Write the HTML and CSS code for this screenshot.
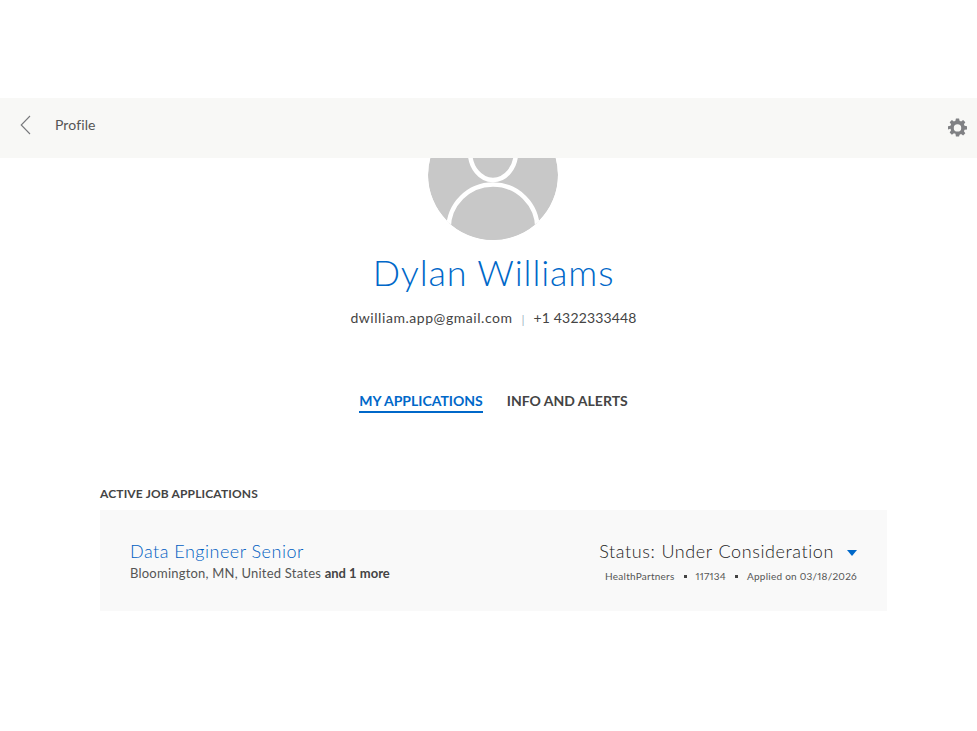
FILE: index.html
```html
<!DOCTYPE html>
<html lang="en">
<head>
<meta charset="utf-8">
<title>Profile</title>
<link rel="stylesheet" href="styles.css">
</head>
<body>
<header class="topbar">
  <a class="back" href="#" aria-label="Back">
    <svg width="11" height="20" viewBox="0 0 11 20"><path d="M10 1 1.2 10 10 19" fill="none" stroke="#77787b" stroke-width="1.1"/></svg>
  </a>
  <span class="topbar-title">Profile</span>
  <svg class="gear" width="19" height="19" viewBox="0 0 24 24"><path fill="#808184" fill-rule="evenodd" d="M10 1h4l.6 3.1 1.900.8L19.100 3.100 21.900 5.900 20.100 8.500l.8 1.900L24 11v4l-3.100.2-.8 1.900 1.800 2.600-2.800 2.800-2.600-1.800-1.900.8L14 24h-4l-.6-3.500-1.900-.8-2.600 1.800-2.800-2.800 1.800-2.600-.8-1.900L0 15v-4l3.100-.6.800-1.900L2.100 5.900 4.900 3.100 7.500 4.900l1.900-.8L10 1Zm2 7.300a4.700 4.700 0 1 0 0 9.400 4.700 4.700 0 0 0 0-9.400Z" transform="translate(0 -.5)"/></svg>
</header>
<main class="page">
  <section class="identity">
    <svg class="avatar" width="130" height="82" viewBox="0 48 130 82">
      <defs><clipPath id="avatar-clip"><circle cx="65" cy="65" r="65"/></clipPath></defs>
      <g clip-path="url(#avatar-clip)">
        <circle cx="65" cy="65" r="65" fill="#c8c8c8"/>
        <ellipse cx="65" cy="42" rx="23" ry="28" fill="#c8c8c8" stroke="#fff" stroke-width="4.500"/>
        <circle cx="65" cy="119" r="44.500" fill="#c8c8c8" stroke="#fff" stroke-width="4.500"/>
      </g>
    </svg>
    <h1 class="name">Dylan Williams</h1>
    <p class="contact"><span class="email">dwilliam.app@gmail.com</span><span class="sep">|</span><span class="phone">+1 4322333448</span></p>
  </section>
  <nav class="tabs">
    <a class="tab active" href="#">MY APPLICATIONS</a>
    <a class="tab" href="#">INFO AND ALERTS</a>
  </nav>
  <section class="applications">
    <h2 class="section-title">ACTIVE JOB APPLICATIONS</h2>
    <article class="card">
      <div class="job">
        <a class="job-title" href="#">Data Engineer Senior</a>
        <p class="job-location">Bloomington, MN, United States <b>and 1 more</b></p>
      </div>
      <div class="state">
        <div class="status"><span>Status: Under Consideration</span><i class="caret"></i></div>
        <p class="meta"><span>HealthPartners</span><span class="dot"></span><span>117134</span><span class="dot"></span><span>Applied on 03/18/2026</span></p>
      </div>
    </article>
  </section>
</main>
</body>
</html>
```
FILE: styles.css
```css
* { box-sizing: border-box; }
html, body { margin: 0; padding: 0; background: #fff; }
body { font-family: Lato, "Open Sans", sans-serif; color: #444; padding-top: 98px; overflow: hidden; height: 731px; }
h1, h2, p { margin: 0; font-weight: normal; }
a { text-decoration: none; }

.topbar { height: 60px; background: #f8f8f6; display: flex; align-items: center; padding: 0 10px 5px 20px; }
.back { display: flex; width: 35px; margin-top: -1px; }
.topbar-title { font-size: 14px; color: #555; letter-spacing: .1px; margin-top: -2px; }
.gear { margin-left: auto; margin-top: 3px; }

.page { display: flex; flex-direction: column; }
.identity { display: flex; flex-direction: column; align-items: center; padding-left: 10px; }
.avatar { display: block; margin-right: 1px; }
.name { font-size: 36px; line-height: 44px; font-weight: 300; color: #0068c9; margin-top: 10px; letter-spacing: .85px; }
.contact { display: flex; align-items: center; font-size: 14px; line-height: 20px; color: #444; margin-top: 14px; }
.email { letter-spacing: .55px; }
.phone { letter-spacing: .15px; }
.sep { color: #9fb2c4; margin: 3px 9px 0 9px; font-size: 12px; line-height: 14px; }

.tabs { display: flex; justify-content: center; gap: 24px; margin-top: 63px; padding-left: 10px; }
.tab { font-size: 14px; line-height: 20px; font-weight: 700; color: #444; padding-bottom: 0; border-bottom: 2px solid transparent; }
.tab.active { color: #0068c9; border-bottom-color: #0068c9; }

.applications { margin: 73px 90px 0 100px; }
.section-title { font-size: 12px; line-height: 16px; font-weight: 700; color: #444; letter-spacing: .15px; }
.card { margin-top: 8px; height: 101px; background: #f9f9f9; padding: 29px 30px 0; display: flex; justify-content: space-between; align-items: flex-start; }
.job-title { display: block; font-size: 18px; line-height: 24px; font-weight: 300; color: #005ec2; letter-spacing: .5px; }
.job-location { font-size: 13px; line-height: 16px; color: #555; margin-top: 2px; letter-spacing: .22px; }
.job-location b { font-weight: 700; color: #444; letter-spacing: 0; }
.state { display: flex; flex-direction: column; align-items: flex-end; }
.status { display: flex; align-items: center; font-size: 18px; line-height: 24px; font-weight: 300; color: #222; letter-spacing: .6px; word-spacing: .5px; }
.caret { width: 0; height: 0; border-left: 5.500px solid transparent; border-right: 5.500px solid transparent; border-top: 6px solid #0068c9; margin: 4px 0 0 13px; }
.meta { display: flex; align-items: center; font-size: 10px; line-height: 14px; color: #555; margin-top: 6px; letter-spacing: .25px; font-variant-numeric: proportional-nums; }
.dot { width: 3px; height: 3px; background: #444; margin: 0 9px; }
```
